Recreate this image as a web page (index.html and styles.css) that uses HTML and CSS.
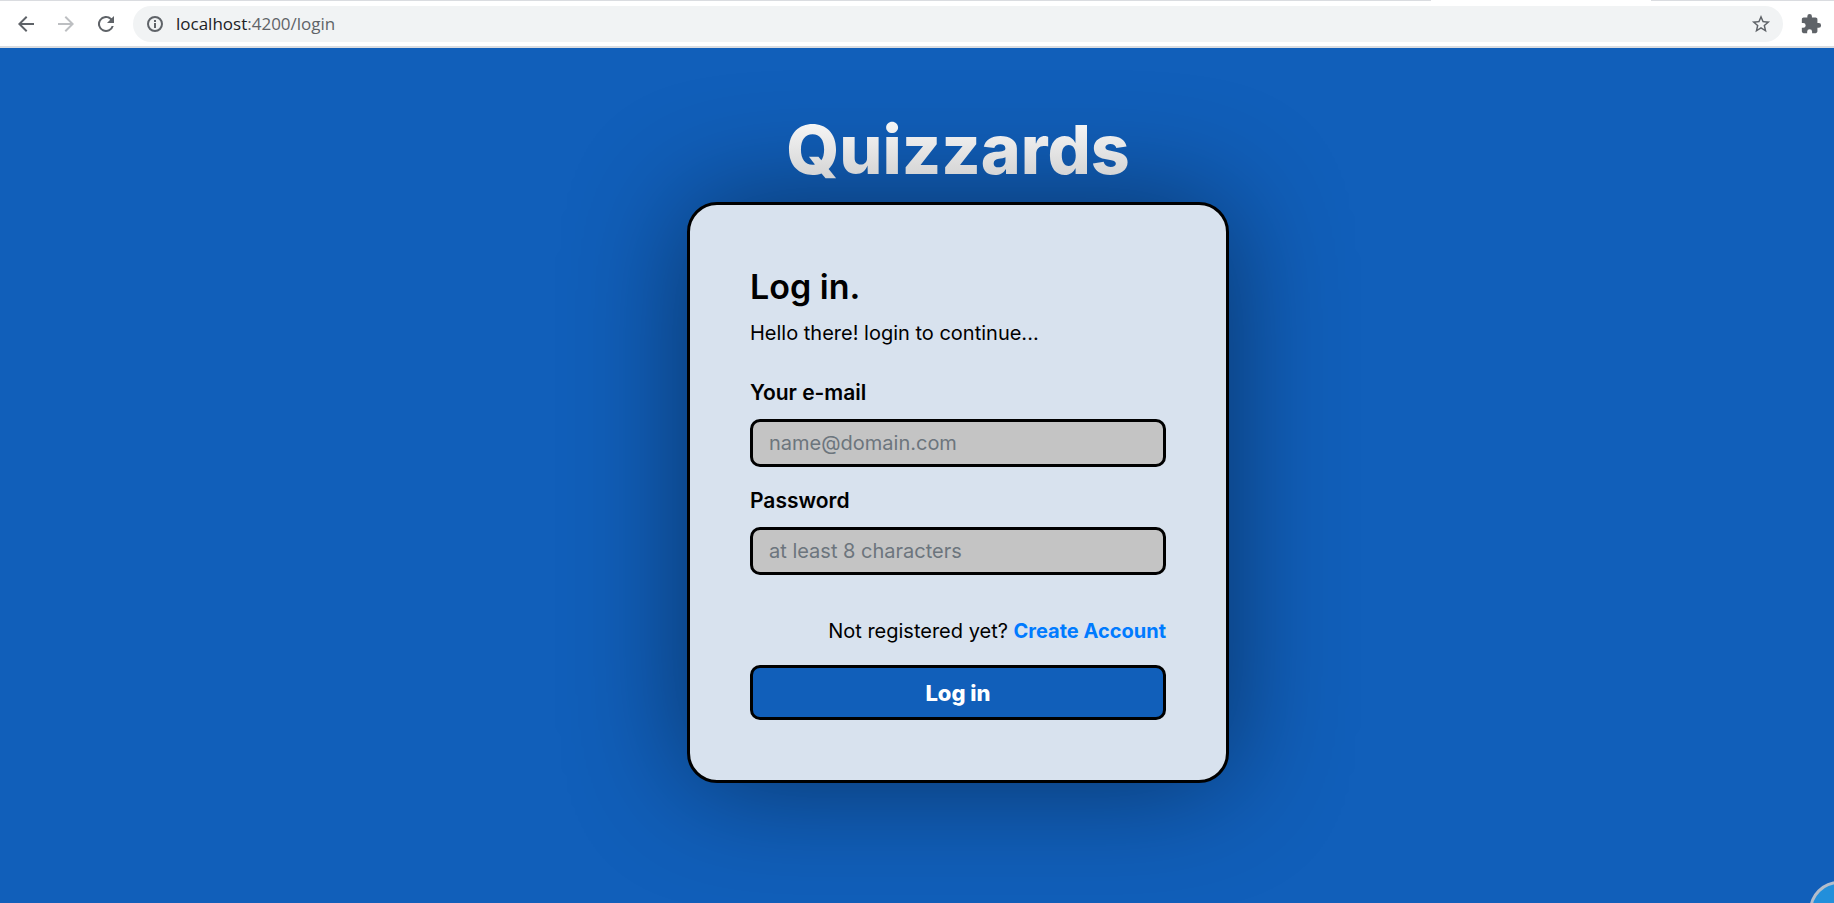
FILE: index.html
```html
<!DOCTYPE html>
<html lang="en">
<head>
<meta charset="utf-8">
<title>Quizzards</title>
<link rel="stylesheet" href="styles.css">
</head>
<body>
<header class="toolbar">
  <div class="tab-edge"><span class="edge-left"></span><span class="edge-right"></span></div>
  <nav class="nav-buttons" aria-label="Browser">
    <button class="icon-button" type="button" aria-label="Back"><svg viewBox="0 0 24 24"><path d="M20 11H7.8l5.6-5.6L12 4l-8 8 8 8 1.4-1.4L7.8 13H20z"/></svg></button>
    <button class="icon-button disabled" type="button" aria-label="Forward" disabled><svg viewBox="0 0 24 24"><path d="M4 11h12.2l-5.6-5.6L12 4l8 8-8 8-1.4-1.4 5.6-5.6H4z"/></svg></button>
    <button class="icon-button" type="button" aria-label="Reload"><svg viewBox="0 0 24 24"><path d="M17.65 6.35A8 8 0 1 0 19.73 14h-2.08A6 6 0 1 1 12 6c1.66 0 3.14.69 4.22 1.78L13 11h7V4z"/></svg></button>
  </nav>
  <div class="omnibox">
    <button class="small-button" type="button" aria-label="Site information"><svg class="info" viewBox="0 0 20 20"><circle cx="10" cy="10" r="7"/><path d="M10 9v5M10 6v2"/></svg></button>
    <span class="url"><span class="host">localhost</span>:4200/login</span>
    <button class="small-button" type="button" aria-label="Bookmark"><svg viewBox="1 1 22 22"><path d="M22 9.24l-7.19-.62L12 2 9.19 8.63 2 9.24l5.46 4.73L5.82 21 12 17.27 18.18 21l-1.63-7.03L22 9.24zM12 15.4l-3.76 2.27 1-4.28-3.32-2.88 4.38-.38L12 6.1l1.71 4.04 4.38.38-3.32 2.88 1 4.28L12 15.4z"/></svg></button>
  </div>
  <button class="icon-button extensions" type="button" aria-label="Extensions"><svg viewBox="0 0 24 24"><path d="M20.5 11H19V7c0-1.1-.9-2-2-2h-4V3.5a2.5 2.5 0 0 0-5 0V5H4c-1.1 0-2 .9-2 2v3.8h1.5a2.7 2.7 0 0 1 0 5.4H2V20c0 1.1.9 2 2 2h3.8v-1.5a2.7 2.7 0 0 1 5.4 0V22H17c1.1 0 2-.9 2-2v-4h1.5a2.5 2.5 0 0 0 0-5z"/></svg></button>
</header>
<main class="page">
  <h1 class="brand">Quizzards</h1>
  <form class="card">
    <h2 class="card-title">Log in.</h2>
    <p class="intro">Hello there! login to continue...</p>
    <label class="label" for="email">Your e-mail</label>
    <input class="field" id="email" type="email" placeholder="name@domain.com">
    <label class="label" for="password">Password</label>
    <input class="field" id="password" type="password" placeholder="at least 8 characters">
    <p class="register">Not registered yet? <a href="#">Create Account</a></p>
    <button class="submit" type="button">Log in</button>
  </form>
  <button class="bubble" type="button" aria-label="Help"></button>
</main>
</body>
</html>
```
FILE: styles.css
```css
* { box-sizing: border-box; }

body {
  margin: 0;
  min-height: 100vh;
  display: flex;
  flex-direction: column;
  overflow: hidden;
  font-family: Inter, "Liberation Sans", sans-serif;
  font-size: 20px;
  line-height: 24px;
  color: #000;
  background: #115fba;
}

.toolbar {
  position: relative;
  display: flex;
  align-items: center;
  height: 48px;
  padding: 1px 11px 0 14px;
  background: #fff;
  border-bottom: 2px solid #dadce0;
}

.tab-edge {
  position: absolute;
  inset: 0 0 auto;
  display: flex;
  justify-content: space-between;
}
.edge-left, .edge-right { height: 1px; background: #dadce0; }
.edge-left { width: 78%; }
.edge-right { width: 10%; }

.nav-buttons { display: flex; gap: 16px; margin-right: 15px; }

.icon-button, .small-button {
  display: block;
  padding: 0;
  border: 0;
  background: none;
  fill: #5f6368;
}
.icon-button { width: 24px; height: 24px; }
.icon-button svg { display: block; width: 24px; height: 24px; }
.disabled { fill: #bdbfc2; }

.omnibox {
  flex: 1;
  display: flex;
  align-items: center;
  height: 36px;
  padding: 0 12px;
  border-radius: 18px;
  background: #f1f3f4;
}
.small-button, .small-button svg { display: block; width: 20px; height: 20px; }
.info { fill: none; stroke: #5f6368; stroke-width: 2; }
.url {
  flex: 1;
  margin-left: 11px;
  font-family: "Open Sans", sans-serif;
  font-size: 17px;
  color: #5f6368;
}
.host { color: #202124; }
.extensions { margin-left: 16px; }
.icon-button.extensions svg { width: 22px; height: 22px; margin: 0 auto; }

.page {
  position: relative;
  flex: 1;
  display: flex;
  flex-direction: column;
  align-items: center;
  padding: 60px 0 60px 82px;
}

.brand {
  position: relative;
  z-index: 1;
  margin: 0 0 12px;
  font-size: 68px;
  line-height: 82px;
  font-weight: 800;
  color: transparent;
  background: linear-gradient(#fff, #ccc);
  background-clip: text;
  -webkit-background-clip: text;
}

.card {
  display: flex;
  flex-direction: column;
  width: 542px;
  max-width: 100%;
  padding: 60px;
  border: 3px solid #000;
  border-radius: 30px;
  background: #d8e2ee;
  box-shadow: 0 0 120px rgba(0, 0, 0, .45);
}

.card-title { margin: 0; font-size: 34px; line-height: 44px; font-weight: 600; }
.intro { margin: 12px 0 36px; }
.label { margin-bottom: 14px; font-size: 21px; font-weight: 600; }
.field {
  width: 100%;
  height: 48px;
  margin-bottom: 22px;
  padding: 0 16px;
  border: 3px solid #000;
  border-radius: 10px;
  background: #c4c4c4;
  font: inherit;
}
.field::placeholder { color: #6c757d; opacity: 1; }
.register { margin: 22px 0; text-align: right; }
.register a { color: #007bff; font-weight: 700; text-decoration: none; }
.submit {
  height: 55px;
  border: 3px solid #000;
  border-radius: 10px;
  background: #115fba;
  color: #fff;
  font: inherit;
  font-size: 22px;
  font-weight: 800;
}

.bubble {
  position: fixed;
  right: -35px;
  bottom: -38px;
  width: 60px;
  height: 60px;
  border: 3px solid #b3bdcb;
  border-radius: 50%;
  background: #228fdb;
}
```
